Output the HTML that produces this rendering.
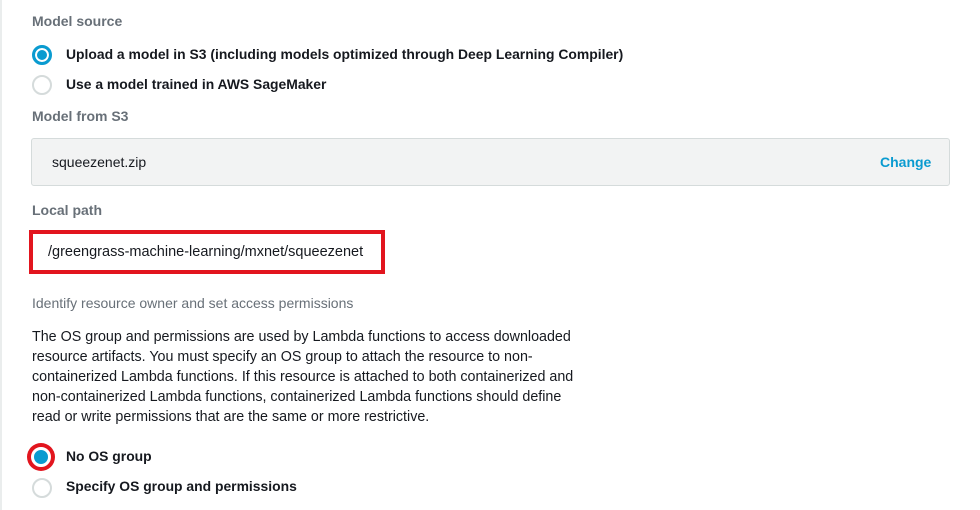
<!DOCTYPE html>
<html><head><style>
body{margin:0;width:980px;height:510px;background:#fff;font-family:"Liberation Sans",sans-serif;position:relative;overflow:hidden;color:#16191f}
.lb{position:absolute;left:0;top:0;width:2px;height:510px;background:#eaeded}
.t{position:absolute;white-space:nowrap}
.lab{font-size:14px;font-weight:bold;color:#687078}
.opt{font-size:13.9px;font-weight:bold;color:#16191f}
.r{position:absolute;width:16px;height:16px;border-radius:50%;box-sizing:border-box;border:2px solid #d5dbdb;background:#fff}
.r.on{border:2px solid #0073bb;background:#0a9bd0;box-shadow:inset 0 0 0 2px #fff}
</style></head><body>
<div class="lb"></div>
<div class="t lab" style="left:32px;top:13px">Model source</div>
<div class="r on" style="left:32px;top:45px;width:20px;height:20px;border-color:#0a9bd0;border-width:3px"></div>
<div class="t opt" style="left:66px;top:46px">Upload a model in S3 (including models optimized through Deep Learning Compiler)</div>
<div class="r" style="left:32px;top:75px;width:20px;height:20px"></div>
<div class="t opt" style="left:66px;top:76px">Use a model trained in AWS SageMaker</div>
<div class="t lab" style="left:32px;top:108px">Model from S3</div>
<div style="position:absolute;left:31px;top:138px;width:919px;height:48px;box-sizing:border-box;border:1px solid #d5dbdb;border-radius:3px;background:#f2f3f3"></div>
<div class="t" style="left:52px;top:154px;font-size:14px">squeezenet.zip</div>
<div class="t" style="left:880px;top:154px;font-size:14px;font-weight:bold;color:#0a9bd0">Change</div>
<div class="t lab" style="left:32px;top:202px">Local path</div>
<div style="position:absolute;left:29px;top:230px;width:356px;height:44px;box-sizing:border-box;border:4px solid #e2151e;background:#fff"></div>
<div class="t" style="left:48px;top:244px;font-size:14.5px">/greengrass-machine-learning/mxnet/squeezenet</div>
<div class="t" style="left:32px;top:295px;font-size:14px;color:#687078">Identify resource owner and set access permissions</div>
<div class="t" style="left:32px;top:327px;font-size:14.3px;line-height:20px;color:#16191f">The OS group and permissions are used by Lambda functions to access downloaded<br>resource artifacts. You must specify an OS group to attach the resource to non-<br>containerized Lambda functions. If this resource is attached to both containerized and<br>non-containerized Lambda functions, containerized Lambda functions should define<br>read or write permissions that are the same or more restrictive.</div>
<div style="position:absolute;left:27px;top:443px;width:28px;height:28px;border-radius:50%;background:#e2151e"></div>
<div class="r on" style="left:31px;top:447px;width:20px;height:20px;border:3px solid #fff;box-shadow:none"></div>
<div class="t opt" style="left:66px;top:448px">No OS group</div>
<div class="r" style="left:32px;top:478px;width:20px;height:20px"></div>
<div class="t opt" style="left:66px;top:478px">Specify OS group and permissions</div>
</body></html>
